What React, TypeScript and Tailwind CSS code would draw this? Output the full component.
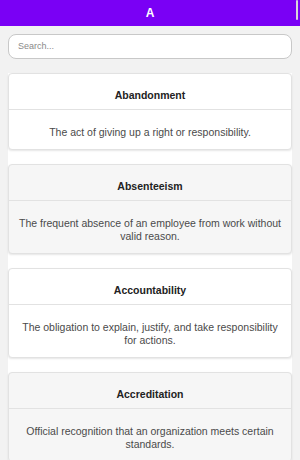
import React from 'react';

interface Term {
  title: string;
  definition: string;
}

const terms: Term[] = [
  { title: 'Abandonment', definition: 'The act of giving up a right or responsibility.' },
  { title: 'Absenteeism', definition: 'The frequent absence of an employee from work without valid reason.' },
  { title: 'Accountability', definition: 'The obligation to explain, justify, and take responsibility for actions.' },
  { title: 'Accreditation', definition: 'Official recognition that an organization meets certain standards.' },
];

const TermCard: React.FC<{ term: Term; shaded: boolean }> = ({ term, shaded }) => (
  <div
    className={`rounded-[4px] border border-[#e2e2e2] shadow-[0_1px_2px_rgba(0,0,0,0.1)] ${
      shaded ? 'bg-[#f6f6f6]' : 'bg-white'
    }`}
  >
    {/* Title */}
    <div className="border-b border-[#e2e2e2] pt-[14px] pb-[7px] text-center">
      <h3 className="text-[10.5px] font-bold leading-[14px] text-[#222]">{term.title}</h3>
    </div>
    {/* Definition */}
    <div className="px-[8px] pt-[16px] pb-[10px] text-center">
      <p className="text-[10.5px] leading-[13px] text-[#4a4a4a]">{term.definition}</p>
    </div>
  </div>
);

export default function App() {
  return (
    <div
      className="relative h-[460px] w-[300px] overflow-hidden bg-[#f2f2f2]"
      style={{ fontFamily: '"Liberation Sans", Arial, sans-serif' }}
    >
      {/* Header */}
      <div className="flex h-[26px] items-center justify-center bg-[#7a00f5]">
        <span className="text-[12px] font-bold text-white">A</span>
      </div>
      {/* scroll indicator */}
      <div className="absolute right-[2px] top-0 h-[20px] w-[2px] rounded-full bg-[#d8d8d8]" />

      {/* Search */}
      <div className="px-2 pt-[6px]">
        <input
          type="text"
          placeholder="Search..."
          className="h-[25px] w-full rounded-[8px] border border-[#c8c8c8] bg-white px-[9px] text-[9px] text-[#333] placeholder:text-[#8a8a8a] outline-none"
          style={{ fontFamily: '"Liberation Sans", Arial, sans-serif' }}
        />
      </div>

      {/* List */}
      <div className="mx-2 mt-[14px] flex flex-col gap-[14px] bg-white">
        {terms.map((t, i) => (
          <TermCard key={t.title} term={t} shaded={i % 2 === 1} />
        ))}
      </div>
    </div>
  );
}
